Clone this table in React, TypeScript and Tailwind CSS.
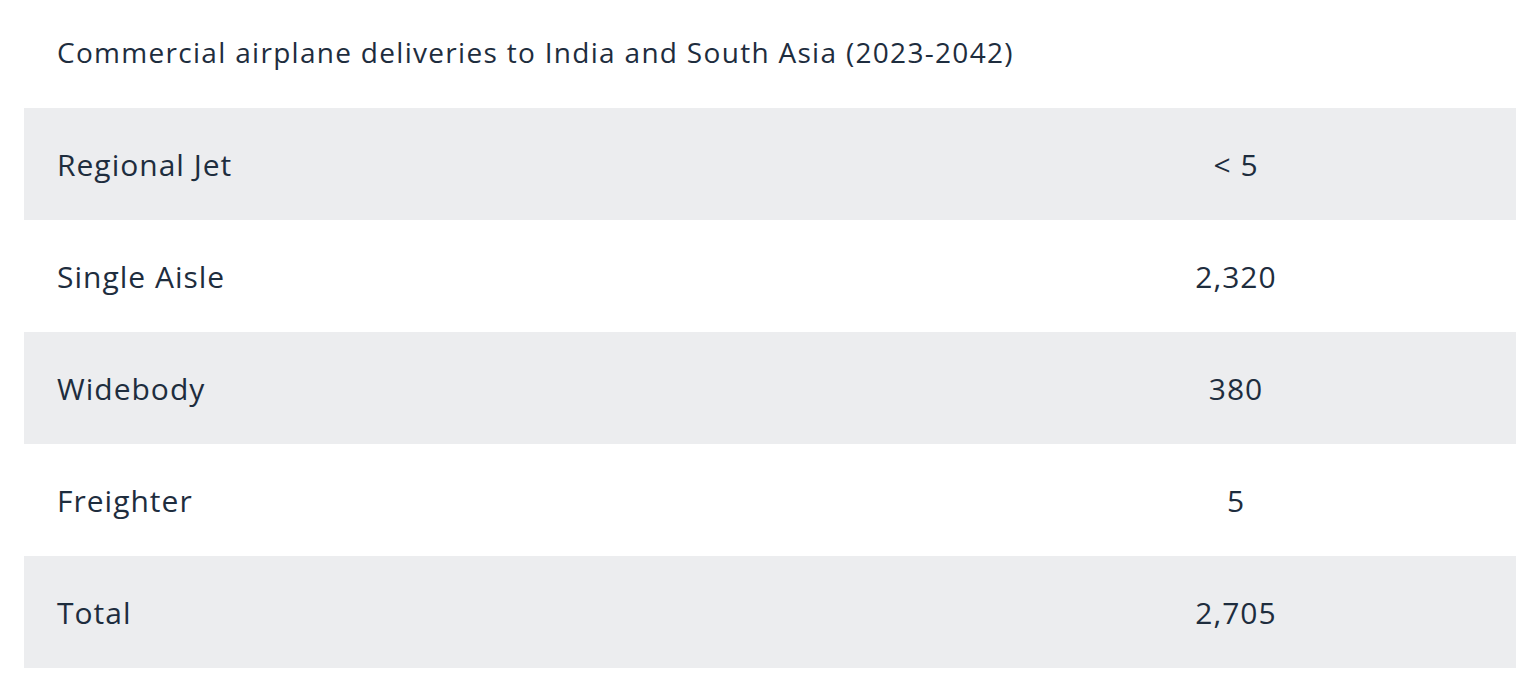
import React from "react";

const rows: [string, string][] = [
  ["Regional Jet", "< 5"],
  ["Single Aisle", "2,320"],
  ["Widebody", "380"],
  ["Freighter", "5"],
  ["Total", "2,705"],
];

export default function App() {
  return (
    <div
      className="w-[1540px] h-[674px] bg-white text-[#1e2d3e] pl-[24px] pr-[24px]"
      style={{ fontFamily: "'Open Sans', 'Noto Sans', sans-serif" }}
    >
      <div className="h-[108px] flex items-center pl-[33px] pb-[5px] text-[28px] leading-none tracking-[1.3px]">
        Commercial airplane deliveries to India and South Asia (2023-2042)
      </div>
      <div className="w-[1492px]">
        {rows.map(([label, value], i) => (
          <div
            key={label}
            className={`grid grid-cols-[932px_560px] h-[112px] items-center text-[30px] tracking-[1px] ${
              i % 2 === 0 ? "bg-[#ecedef]" : "bg-white"
            }`}
          >
            <div className="pl-[33px]">{label}</div>
            <div className="text-center">{value}</div>
          </div>
        ))}
      </div>
    </div>
  );
}
